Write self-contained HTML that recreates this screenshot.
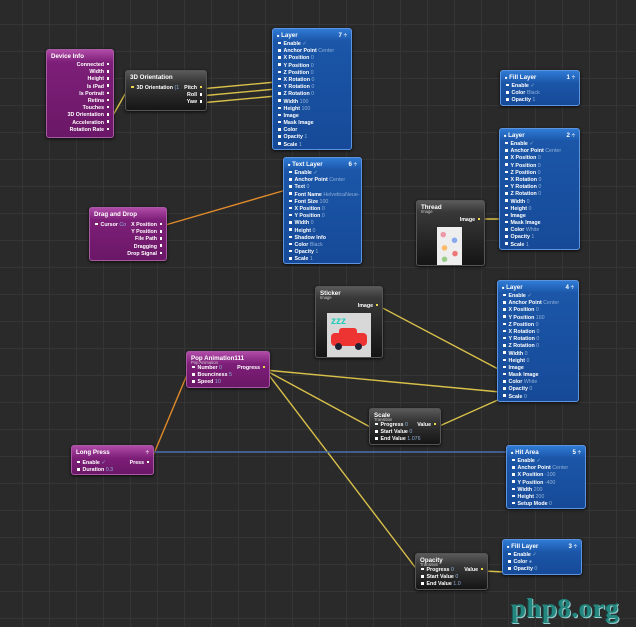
<!DOCTYPE html>
<html><head><meta charset="utf-8"><style>
html,body{margin:0;padding:0}
body{width:636px;height:627px;overflow:hidden;position:relative;background-color:#2a2a2a;
background-image:linear-gradient(#353535 1px,transparent 1px),linear-gradient(90deg,#353535 1px,transparent 1px);background-size:27px 27px;background-position:-5px -3px;
font-family:"Liberation Sans",sans-serif}
.n{position:absolute;border-radius:3px;box-shadow:0 1px 3px rgba(0,0,0,.8);color:#fff;font-size:5.3px;font-weight:bold;overflow:hidden}
.n .h{padding:2px 4px 1px;font-size:6.2px;height:9px;line-height:9px;position:relative}
.n .h .s{display:block;font-size:4.2px;font-weight:normal;line-height:4px;color:#ccc;margin-top:-2px}
.n .h .r{position:absolute;right:4px;top:2px}
.r1{height:7.2px;line-height:7.2px;white-space:nowrap;position:relative}
.b{background:linear-gradient(#2f7bd6,#1b56a8 12px,#164a98);border:1px solid #5d94e0}
.p{background:linear-gradient(#b04aa8,#7d1f78 12px,#6b1767);border:1px solid #a95aa5}
.d{background:linear-gradient(#5a5a5a,#383838 11px,#151515);border:1px solid #555}
.dot{display:inline-block;width:2.5px;height:2.5px;background:#fff;vertical-align:middle;margin:0 3px 1px 0}
.ydot{background:#e8d84a}
.g{color:#8fb0d8;font-weight:normal}
.rt{text-align:right;padding-right:4px}
.lt{padding-left:5px}
</style></head><body>
<svg width="636" height="627" style="position:absolute;left:0;top:0">
<g stroke-width="1.4" fill="none">
<line x1="112" y1="117" x2="128" y2="89" stroke="#d8c04a"/>
<line x1="200" y1="89" x2="276" y2="82" stroke="#d8c04a"/>
<line x1="200" y1="96" x2="276" y2="89" stroke="#d8c04a"/>
<line x1="200" y1="103" x2="276" y2="96" stroke="#d8c04a"/>
<line x1="162" y1="226" x2="286" y2="190" stroke="#e08a2a"/>
<line x1="479" y1="219" x2="502" y2="219" stroke="#d8c04a"/>
<line x1="377" y1="305" x2="500" y2="370" stroke="#d8c04a"/>
<line x1="265" y1="370" x2="500" y2="392" stroke="#d8c04a"/>
<line x1="265" y1="370" x2="372" y2="428" stroke="#d8c04a"/>
<line x1="265" y1="370" x2="418" y2="571" stroke="#d8c04a"/>
<line x1="435" y1="428" x2="500" y2="399" stroke="#d8c04a"/>
<line x1="150" y1="463" x2="189" y2="370" stroke="#e08a2a"/>
<line x1="152" y1="452" x2="506" y2="452" stroke="#4a6fb0"/>
<line x1="483" y1="571" x2="505" y2="572" stroke="#d8c04a"/>
</g></svg>
<div id="c"></div>
<div style="position:absolute;left:511px;top:593px;font-family:'Liberation Serif',serif;font-weight:bold;font-size:27px;color:#23877f;text-shadow:1px 1px 0 #9cc,-1px 0 0 #164a46;letter-spacing:.5px">php8.org</div>
<script>
function N(cls,x,y,w,title,num,sub,rows,extra){
 var h='<div class="n '+cls+'" style="left:'+x+'px;top:'+y+'px;width:'+w+'px'+(extra||'')+'"><div class="h">'+(cls=='b'?'<span style="font-size:4px">&#9632;</span> ':'')+title+(sub?'<span class="s">'+sub+'</span>':'')+(num?'<span class="r">'+num+'</span>':'')+'</div>';
 h+=rows;h+='</div>';document.getElementById('c').insertAdjacentHTML('beforeend',h);
}
function L(arr){return arr.map(function(a){var p=a.split('|');return '<div class="r1 lt"><span class="dot"></span>'+p[0]+(p[1]?' <span class="g">'+p[1]+'</span>':'')+'</div>'}).join('')}
function R(arr){return arr.map(function(a){return '<div class="r1 rt">'+a+' <span class="dot" style="margin:0 0 1px 1px"></span></div>'}).join('')}
N('p',46,49,66,'Device Info','','',R(['Connected','Width','Height','Is iPad','Is Portrait','Retina','Touches','3D Orientation','Acceleration','Rotation Rate'])+'<div style="height:3px"></div>');
N('d',125,70,80,'3D Orientation','','','<div class="r1 lt" style="margin-top:2px"><span class="dot ydot"></span>3D Orientation <span class="g">(1</span><span style="position:absolute;right:4px">Pitch <span class="dot ydot" style="margin:0 0 1px 1px"></span></span></div>'+R(['Roll','Yaw'])+'<div style="height:3px"></div>');
N('b',272,28,78,'Layer','7 ÷','',L(['Enable|✓','Anchor Point|Center','X Position|0','Y Position|0','Z Position|0','X Rotation|0','Y Rotation|0','Z Rotation|0','Width|100','Height|100','Image','Mask Image','Color','Opacity|1','Scale|1']));
N('b',283,157,77,'Text Layer','6 ÷','',L(['Enable|✓','Anchor Point|Center','Text|0','Font Name|HelveticaNeue-','Font Size|100','X Position|0','Y Position|0','Width|0','Height|0','Shadow Info','Color|Black','Opacity|1','Scale|1']));
N('b',500,70,78,'Fill Layer','1 ÷','',L(['Enable|✓','Color|Black','Opacity|1']));
N('b',499,128,79,'Layer','2 ÷','',L(['Enable|✓','Anchor Point|Center','X Position|0','Y Position|0','Z Position|0','X Rotation|0','Y Rotation|0','Z Rotation|0','Width|0','Height|0','Image','Mask Image','Color|White','Opacity|1','Scale|1']));
N('p',89,207,76,'Drag and Drop','','','<div class="r1 lt" style="margin-top:2px"><span class="dot"></span>Cursor <span class="g">Co</span><span style="position:absolute;right:4px">X Position <span class="dot" style="margin:0 0 1px 1px"></span></span></div>'+R(['Y Position','File Path','Dragging','Drop Signal'])+'<div style="height:2px"></div>');
N('d',416,200,67,'Thread','','Image','<div class="r1 rt" style="margin-top:4px">Image <span class="dot ydot" style="margin:0 0 1px 1px"></span></div><div style="margin:3px 0 0 20px;width:25px;height:38px;background-color:#eee;background-image:radial-gradient(circle at 25% 20%,#e9a 2.5px,transparent 3px),radial-gradient(circle at 70% 35%,#8ae 2.5px,transparent 3px),radial-gradient(circle at 30% 55%,#fb6 2.5px,transparent 3px),radial-gradient(circle at 72% 70%,#e77 2.5px,transparent 3px),radial-gradient(circle at 30% 85%,#9c8 2.5px,transparent 3px)"></div>');
N('d',315,286,66,'Sticker','','Image','<div class="r1 rt" style="margin-top:4px">Image <span class="dot ydot" style="margin:0 0 1px 1px"></span></div><div style="margin:3px 0 0 11px;width:44px;height:44px;background:#d8d8d8;position:relative"><div style="position:absolute;left:4px;top:3px;color:#2cb;font-size:10px;font-weight:bold">zzz</div><div style="position:absolute;left:4px;top:20px;width:36px;height:13px;background:#e33;border-radius:4px"></div><div style="position:absolute;left:12px;top:15px;width:18px;height:8px;background:#e33;border-radius:3px 3px 0 0"></div><div style="position:absolute;left:8px;top:30px;width:7px;height:7px;background:#223;border-radius:50%"></div><div style="position:absolute;left:28px;top:30px;width:7px;height:7px;background:#223;border-radius:50%"></div></div>');
N('b',497,280,80,'Layer','4 ÷','',L(['Enable|✓','Anchor Point|Center','X Position|0','Y Position|160','Z Position|0','X Rotation|0','Y Rotation|0','Z Rotation|0','Width|0','Height|0','Image','Mask Image','Color|White','Opacity|0','Scale|0']));
N('p',186,351,82,'Pop Animation111','','Pop Animation','<div class="r1 lt" style="margin-top:1px"><span class="dot"></span>Number <span class="g">0</span><span style="position:absolute;right:4px">Progress <span class="dot ydot" style="margin:0 0 1px 1px"></span></span></div>'+L(['Bounciness|5','Speed|10']));
N('d',369,408,70,'Scale','','Transition','<div class="r1 lt" style="margin-top:1px"><span class="dot"></span>Progress <span class="g">0</span><span style="position:absolute;right:4px">Value <span class="dot ydot" style="margin:0 0 1px 1px"></span></span></div>'+L(['Start Value|0','End Value|1.076']));
N('p',71,445,81,'Long Press','÷','','<div class="r1 lt" style="margin-top:2px"><span class="dot"></span>Enable <span class="g">✓</span><span style="position:absolute;right:4px">Press <span class="dot" style="margin:0 0 1px 1px"></span></span></div>'+L(['Duration|0.3']));
N('b',506,445,78,'Hit Area','5 ÷','',L(['Enable|✓','Anchor Point|Center','X Position|-100','Y Position|-400','Width|200','Height|200','Setup Mode|0']));
N('d',415,553,71,'Opacity','','Transition','<div class="r1 lt" style="margin-top:1px"><span class="dot"></span>Progress <span class="g">0</span><span style="position:absolute;right:4px">Value <span class="dot ydot" style="margin:0 0 1px 1px"></span></span></div>'+L(['Start Value|0','End Value|1.0']));
N('b',502,539,78,'Fill Layer','3 ÷','',L(['Enable|✓','Color|●','Opacity|0']));
</script>
</body></html>
